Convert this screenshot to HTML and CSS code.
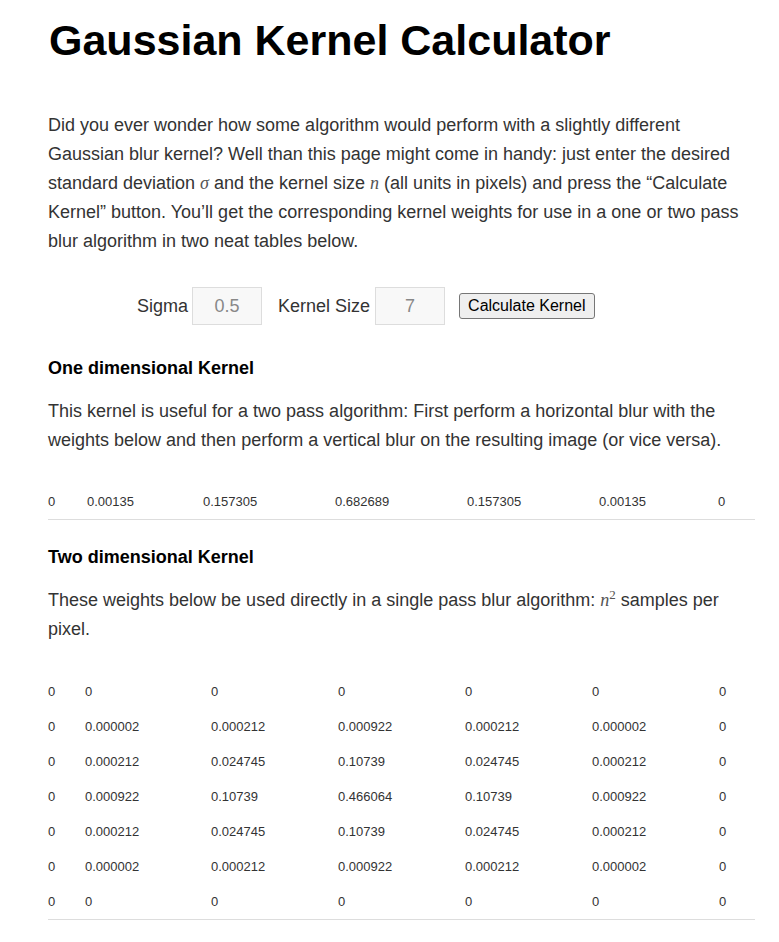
FILE: index.html
```html
<!DOCTYPE html>
<html>
<head>
<meta charset="utf-8">
<link rel="stylesheet" href="styles.css">
</head>
<body>
<div class="page">
  <h1 class="title">Gaussian Kernel Calculator</h1>
  <p class="text intro">Did you ever wonder how some algorithm would perform with a slightly different Gaussian blur kernel? Well than this page might come in handy: just enter the desired standard deviation <span class="math">σ</span> and the kernel size <span class="math">n</span> (all units in pixels) and press the “Calculate Kernel” button. You’ll get the corresponding kernel weights for use in a one or two pass blur algorithm in two neat tables below.</p>
  <div class="form">
    <label class="lbl">Sigma</label>
    <input class="field" type="text" value="0.5">
    <label class="lbl lbl-size">Kernel Size</label>
    <input class="field" type="text" value="7">
    <button class="btn">Calculate Kernel</button>
  </div>
  <h4 class="heading h-one">One dimensional Kernel</h4>
  <p class="text">This kernel is useful for a two pass algorithm: First perform a horizontal blur with the weights below and then perform a vertical blur on the resulting image (or vice versa).</p>
  <table class="kernel k1">
    <colgroup><col class="c1a"><col class="c1b"><col class="c1c"><col class="c1c"><col class="c1c"><col class="c1d"><col></colgroup>
    <tr><td>0</td><td>0.00135</td><td>0.157305</td><td>0.682689</td><td>0.157305</td><td>0.00135</td><td>0</td></tr>
  </table>
  <h4 class="heading h-two">Two dimensional Kernel</h4>
  <p class="text">These weights below be used directly in a single pass blur algorithm: <span class="math">n<sup>2</sup></span> samples per pixel.</p>
  <table class="kernel k2">
    <colgroup><col class="c2a"><col class="c2b"><col class="c2c"><col class="c2c"><col class="c2c"><col class="c2c"><col></colgroup>
    <tr><td>0</td><td>0</td><td>0</td><td>0</td><td>0</td><td>0</td><td>0</td></tr>
    <tr><td>0</td><td>0.000002</td><td>0.000212</td><td>0.000922</td><td>0.000212</td><td>0.000002</td><td>0</td></tr>
    <tr><td>0</td><td>0.000212</td><td>0.024745</td><td>0.10739</td><td>0.024745</td><td>0.000212</td><td>0</td></tr>
    <tr><td>0</td><td>0.000922</td><td>0.10739</td><td>0.466064</td><td>0.10739</td><td>0.000922</td><td>0</td></tr>
    <tr><td>0</td><td>0.000212</td><td>0.024745</td><td>0.10739</td><td>0.024745</td><td>0.000212</td><td>0</td></tr>
    <tr><td>0</td><td>0.000002</td><td>0.000212</td><td>0.000922</td><td>0.000212</td><td>0.000002</td><td>0</td></tr>
    <tr><td>0</td><td>0</td><td>0</td><td>0</td><td>0</td><td>0</td><td>0</td></tr>
  </table>
</div>
</body>
</html>
```
FILE: styles.css
```css
html, body { margin: 0; padding: 0; background: #fff; }
body { font-family: "Liberation Sans", Arial, sans-serif; color: #333; }
.page { width: 707px; padding: 0 0 0 48px; }
.title { margin: 0 0 0 1px; padding-top: 15px; font-size: 43px; line-height: 50px; font-weight: bold; color: #000; }
.text { font-size: 18px; line-height: 29px; margin: 0; color: #333; }
.intro { margin-top: 46px; }
.math { font-family: "Liberation Serif", "DejaVu Serif", serif; font-style: italic; color: #555; }
.math sup { font-style: normal; font-size: 13px; line-height: 0; }
.form { display: flex; align-items: center; padding-left: 89px; margin-top: 31px; height: 38px; }
.lbl { font-size: 18px; color: #333; margin-right: 4px; }
.lbl-size { margin-left: 16px; margin-right: 5px; }
.field { box-sizing: border-box; width: 70px; height: 38px; border: 1px solid #ddd; background: #f8f8f8; color: #888; font-family: "Liberation Sans", Arial, sans-serif; font-size: 18px; text-align: center; padding: 0; border-radius: 0; }
.btn { margin-left: 14px; height: 26px; padding: 0 8px; font-family: "Liberation Sans", Arial, sans-serif; font-size: 16px; color: #000; background: #efefef; border: 1px solid #767676; border-radius: 3px; }
.heading { margin: 0; font-size: 18px; line-height: 20px; font-weight: bold; color: #000; }
.h-one { margin-top: 33px; margin-bottom: 19px; }
.h-two { margin-top: 27px; margin-bottom: 19px; }
.kernel { width: 707px; border-collapse: collapse; table-layout: fixed; font-size: 13px; color: #333; }
.kernel td { padding: 0; text-align: left; }
.k1 { margin-top: 29px; border-bottom: 1px solid #ddd; }
.k1 td { height: 35px; vertical-align: middle; }
.k2 { margin-top: 30px; border-bottom: 1px solid #ddd; }
.k2 td { height: 35px; vertical-align: middle; }
.c1a { width: 39px; } .c1b { width: 116px; } .c1c { width: 132px; } .c1d { width: 119px; }
.c2a { width: 37px; } .c2b { width: 126px; } .c2c { width: 127px; }
```
